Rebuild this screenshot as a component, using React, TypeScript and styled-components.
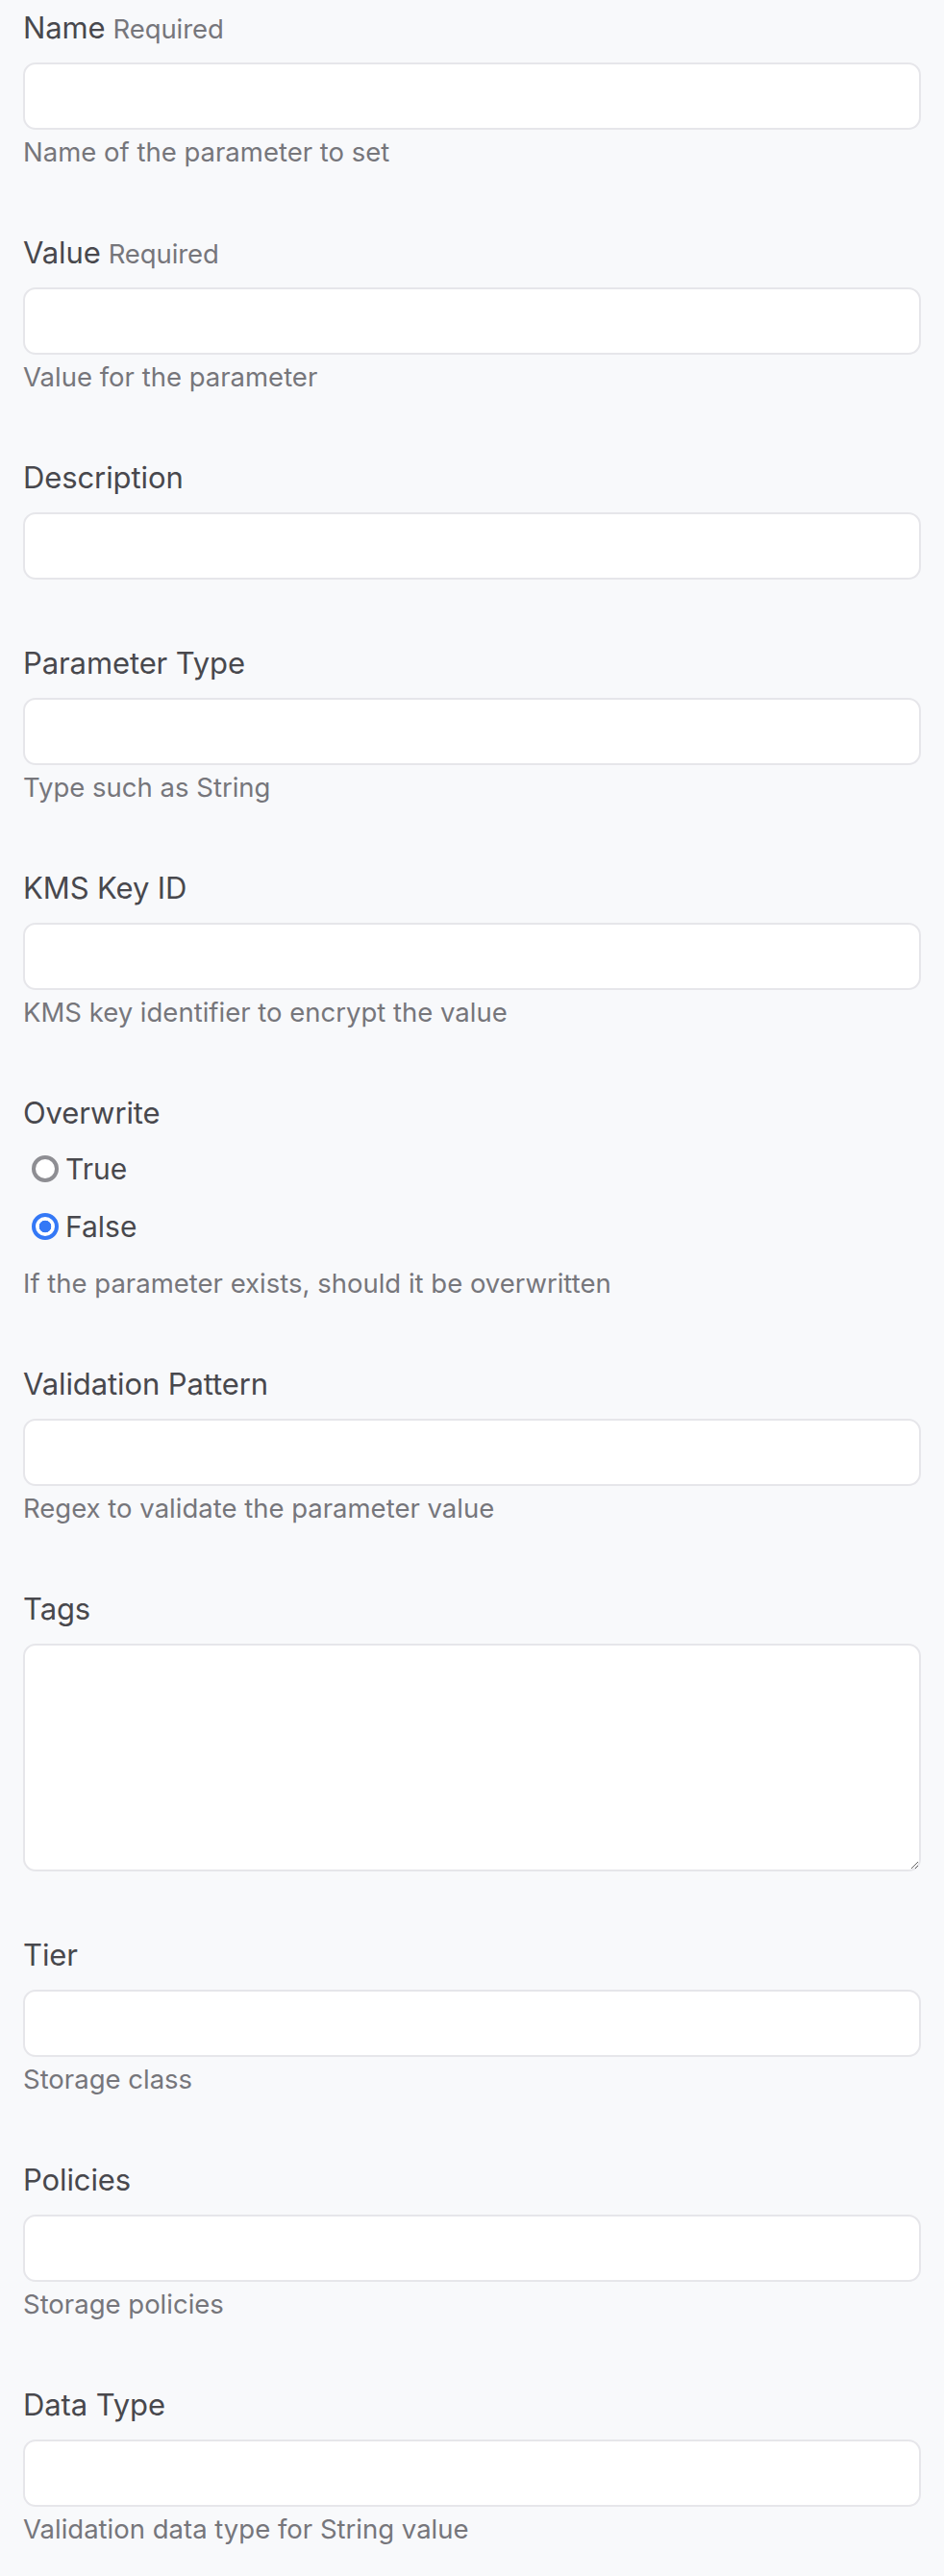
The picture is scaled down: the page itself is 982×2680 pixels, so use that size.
import React from "react";
import styled, { createGlobalStyle } from "styled-components";

const Global = createGlobalStyle`
  html, body {
    margin: 0;
    padding: 0;
    background: #f8f9fb;
  }
  body {
    font-family: Inter, "Noto Sans", "Liberation Sans", sans-serif;
    -webkit-font-smoothing: antialiased;
  }
  * { box-sizing: border-box; }
`;

const Form = styled.form`
  display: flex;
  flex-direction: column;
  gap: 69px;
  padding: 11px 24px 40px;
`;

const Field = styled.div`
  display: flex;
  flex-direction: column;
`;

const Label = styled.label`
  display: block;
  font-size: 31px;
  line-height: 36px;
  height: 36px;
  color: #48484d;
  font-weight: 400;
  letter-spacing: -0.1px;
`;

const Req = styled.span`
  font-size: 27.5px;
  line-height: 1;
  color: #76767b;
  margin-left: 8px;
`;

const Input = styled.input`
  display: block;
  width: 100%;
  height: 70px;
  margin-top: 18px;
  background: #ffffff;
  border: 2px solid #e6e6ea;
  border-radius: 13px;
  padding: 0 16px;
  font: inherit;
  font-size: 26px;
  outline: none;
`;

const TextArea = styled.textarea`
  display: block;
  width: 100%;
  height: 237px;
  margin-top: 18px;
  background: #ffffff;
  border: 2px solid #e6e6ea;
  border-radius: 13px;
  padding: 12px 16px;
  font: inherit;
  font-size: 26px;
  outline: none;
  resize: vertical;
`;

const Help = styled.div`
  margin-top: 5px;
  font-size: 27.5px;
  line-height: 36px;
  color: #76767b;
`;

const RadioGroup = styled.div`
  display: flex;
  flex-direction: column;
  margin: 10px 0 6px;
`;

const RadioRow = styled.label`
  display: flex;
  align-items: center;
  height: 60px;
  padding-left: 9px;
  gap: 7px;
  font-size: 30px;
  color: #48484d;
`;

const Radio = styled.input`
  appearance: none;
  -webkit-appearance: none;
  margin: 0;
  width: 28px;
  height: 28px;
  border-radius: 50%;
  border: 4px solid #8e8e93;
  background: #ffffff;
  flex: none;
  &:checked {
    border-color: #3478f6;
    background: radial-gradient(circle, #3478f6 0 6px, #ffffff 6.6px);
  }
`;

type F = { label: string; required?: boolean; help?: string; area?: boolean };

const fields: F[] = [
  { label: "Name", required: true, help: "Name of the parameter to set" },
  { label: "Value", required: true, help: "Value for the parameter" },
  { label: "Description" },
  { label: "Parameter Type", help: "Type such as String" },
  { label: "KMS Key ID", help: "KMS key identifier to encrypt the value" },
];

const fields2: F[] = [
  { label: "Validation Pattern", help: "Regex to validate the parameter value" },
  { label: "Tags", area: true },
  { label: "Tier", help: "Storage class" },
  { label: "Policies", help: "Storage policies" },
  { label: "Data Type", help: "Validation data type for String value" },
];

function TextField({ f }: { f: F }) {
  return (
    <Field>
      <Label>
        {f.label}
        {f.required && <Req>Required</Req>}
      </Label>
      {f.area ? <TextArea /> : <Input type="text" />}
      {f.help && <Help>{f.help}</Help>}
    </Field>
  );
}

export default function App() {
  return (
    <>
      <Global />
      <Form onSubmit={(e) => e.preventDefault()}>
        {fields.map((f) => (
          <TextField key={f.label} f={f} />
        ))}
        <Field>
          <Label>Overwrite</Label>
          <RadioGroup>
            <RadioRow>
              <Radio type="radio" name="overwrite" value="true" />
              True
            </RadioRow>
            <RadioRow>
              <Radio type="radio" name="overwrite" value="false" defaultChecked />
              False
            </RadioRow>
          </RadioGroup>
          <Help>If the parameter exists, should it be overwritten</Help>
        </Field>
        {fields2.map((f) => (
          <TextField key={f.label} f={f} />
        ))}
      </Form>
    </>
  );
}
